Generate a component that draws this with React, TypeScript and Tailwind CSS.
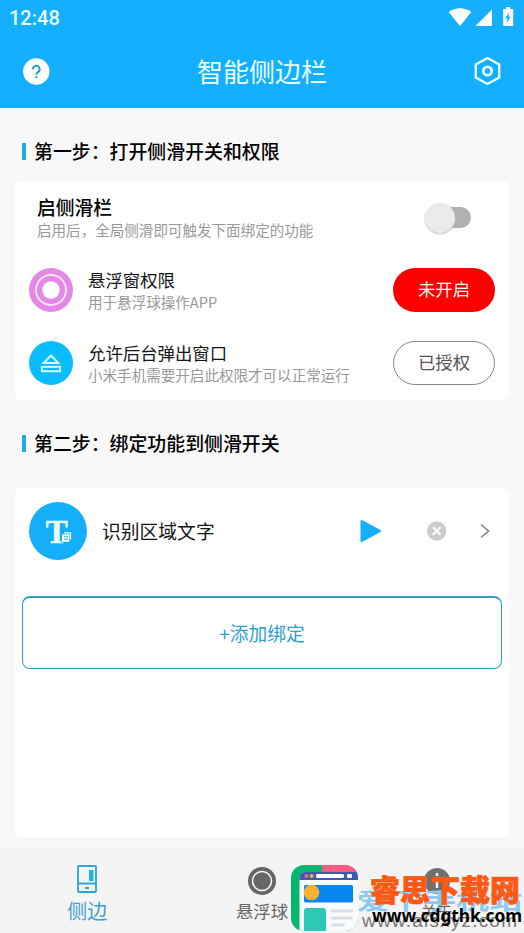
import React from "react";

const cjk = "font-['Noto_Sans_CJK_SC',sans-serif]";

function StatusBar() {
  return (
    <div className="flex h-9 items-center justify-between pl-[9px] pr-2 text-[#eaffff]">
      <span className="font-[Roboto,sans-serif] text-[20px] font-medium leading-9">12:48</span>
      <svg className="h-9 w-[68px]" viewBox="0 0 68 36" fill="#fff">
        <path d="M.7 12Q12 4.500 23.300 12L12 26z" />
        <path d="M44 9.500V26H27.500z" />
        <path d="M55.200 9h3V7h4v2h3v17h-10z" />
        <path d="M61.500 12l-4.500 6.500h2.500L58.700 23l4-6.500h-2.400z" fill="#12aeff" />
      </svg>
    </div>
  );
}

function Header() {
  return (
    <header className="h-[108px] shrink-0 bg-[#14affe]">
      <StatusBar />
      <div className="flex h-[70px] items-center justify-between pl-[23px] pr-[23px]">
        <svg className="h-[27px] w-[27px]" viewBox="0 0 27 27">
          <circle cx="13.300" cy="13.500" r="13.200" fill="#fff" />
          <path d="M9.900 11.200a3.400 3.400 0 1 1 5.100 2.900q-1.700 1-1.700 2.600" fill="none" stroke="#249bd0" strokeWidth="1.900" />
          <circle cx="13.300" cy="19.200" r="1.100" fill="#249bd0" />
        </svg>
        <h1 className="text-[26px] leading-[36px] text-[#eaffff]">智能侧边栏</h1>
        <svg className="h-[30px] w-[27px]" viewBox="0 0 27 30" fill="none" stroke="#eaffff">
          <path d="M13.500 2L25.200 8.500v13L13.500 28 1.800 21.500v-13z" strokeWidth="2.400" />
          <circle cx="13.500" cy="15" r="4.200" strokeWidth="2.700" />
        </svg>
      </div>
    </header>
  );
}

function StepTitle({ children }: { children: string }) {
  return (
    <div className="flex h-7 items-center pl-[22px]">
      <span className="mr-2 h-[17px] w-1 rounded-[1px] bg-[#20aae2]" />
      <h2 className="text-[18.9px] font-medium leading-7 text-black">{children}</h2>
    </div>
  );
}

function Permission({ icon, title, note, action }: { icon: React.ReactNode; title: string; note: string; action: React.ReactNode }) {
  return (
    <div className="flex h-[73px] items-center pl-[14px] pr-[14px]">
      {icon}
      <div className="ml-[15px] flex-1">
        <div className="text-[17.4px] leading-[22px] text-[#151515]">{title}</div>
        <div className="text-[14.550px] leading-[21px] text-[#999]">{note}</div>
      </div>
      {action}
    </div>
  );
}

function Permissions() {
  return (
    <section className="mx-[15px] h-[219px] rounded-md bg-white">
      <div className="flex h-[73px] items-center justify-between pl-[22px] pr-[38px]">
        <div className="-mt-px">
          <div className="text-[18.8px] font-medium leading-6 text-black">启侧滑栏</div>
          <div className="text-[14.550px] leading-[21px] text-[#999]">启用后，全局侧滑即可触发下面绑定的功能</div>
        </div>
        <div className="flex h-[21px] w-[46px] items-center rounded-full bg-[#b1b1b1]">
          <span className="h-[30px] w-[30px] shrink-0 rounded-full bg-[#ebebeb] shadow-[0_1px_2px_#bbb]" />
        </div>
      </div>
      <Permission
        icon={
          <svg className="mb-[2px] h-11 w-11" viewBox="0 0 44 44">
            <circle cx="22" cy="22" r="22" fill="#e388e5" />
            <circle cx="22" cy="22" r="15" fill="none" stroke="#fbe7fb" strokeWidth="1.800" />
            <circle cx="22" cy="22" r="8.700" fill="#fff" />
          </svg>
        }
        title="悬浮窗权限"
        note="用于悬浮球操作APP"
        action={<button className="mb-[2px] h-11 w-[102px] rounded-full bg-[#fe0000] text-[17.4px] text-[#fff4f0]">未开启</button>}
      />
      <Permission
        icon={
          <svg className="mb-[2px] h-11 w-11" viewBox="0 0 44 44">
            <circle cx="22" cy="22" r="22" fill="#08bdff" />
            <path d="M22 14.500l7.300 7.500H14.700z" fill="none" stroke="#d8faff" strokeWidth="2" />
            <rect x="12.900" y="25.800" width="18.200" height="4.400" fill="none" stroke="#d8faff" strokeWidth="2" />
          </svg>
        }
        title="允许后台弹出窗口"
        note="小米手机需要开启此权限才可以正常运行"
        action={<button className="mb-[2px] h-11 w-[102px] rounded-full border border-[#888] text-[17.4px] text-[#555]">已授权</button>}
      />
    </section>
  );
}

function Bindings() {
  return (
    <section className="mx-[15px] mt-[31px] h-[349px] rounded-md bg-white">
      <div className="flex h-[85px] items-center pl-[14px]">
        <svg className="h-[58px] w-[58px]" viewBox="0 0 58 58">
          <circle cx="29" cy="29" r="29" fill="#15aefb" />
          <text x="16.800" y="40.500" fill="#eaffff" stroke="#eaffff" strokeWidth=".5" fontFamily="Liberation Serif, serif" fontWeight="700" fontSize="33">T</text>
          <path d="M32.200 29.500h11v11h-11z" fill="#15aefb" />
          <rect x="33" y="32.300" width="7.500" height="7.700" rx="1" fill="#eaffff" />
          <path d="M35 30.800h6.500v6.500" fill="none" stroke="#eaffff" strokeWidth="1.300" />
          <path d="M35 34.700h4M35 37.200h4" stroke="#15aefb" strokeWidth=".9" />
        </svg>
        <span className="ml-[15px] flex-1 text-[18.8px] leading-7 text-[#151515]">识别区域文字</span>
        <svg className="h-7 w-6" viewBox="0 0 24 28">
          <path d="M2.500 4L21 14 2.500 24z" fill="#15aefb" stroke="#15aefb" strokeWidth="2" strokeLinejoin="round" />
        </svg>
        <svg className="ml-[44px] h-5 w-5" viewBox="0 0 20 20">
          <circle cx="9.700" cy="10" r="9.700" fill="#ccc" />
          <path d="M5.900 6.200l7.600 7.600m0-7.600l-7.600 7.600" stroke="#fff" strokeWidth="2.100" />
        </svg>
        <svg className="ml-[32px] mr-[18px] h-4 w-[12px]" viewBox="0 0 12 16" fill="none" stroke="#858585" strokeWidth="1.600">
          <path d="M2 1.500L9.500 8 2 14.500" />
        </svg>
      </div>
      <button className="ml-[7px] mt-[23px] block h-[73px] w-[480px] rounded-lg border border-t-2 border-[#329dca] text-[18.8px] text-[#2ba2d2]">
        +添加绑定
      </button>
    </section>
  );
}

function Watermark() {
  return (
    <div className="absolute bottom-0 left-[290px] h-[72px] w-[234px]">
      <svg className="absolute left-0 top-[3px] h-[68px] w-[68px]" viewBox="0 0 68 68">
        <defs>
          <clipPath id="tile">
            <rect x="1" y="1" width="67" height="66" rx="13" />
          </clipPath>
        </defs>
        <g clipPath="url(#tile)">
          <rect width="68" height="68" fill="#07b76f" />
          <rect x="32" width="36" height="20" fill="#f85a83" />
          <path d="M9.500 14q0-6 6-6h53v60h-59z" fill="#f9fcff" />
          <path d="M9.500 16V14q0-6 6-6h53v8z" fill="#3e5ba9" />
          <circle cx="16.500" cy="12" r="1.900" fill="#f0678c" />
          <circle cx="21.600" cy="12" r="1.900" fill="#ffb331" />
          <rect x="26" y="10" width="28" height="4" rx="1.500" fill="#fff" />
          <rect x="57" y="10" width="5" height="4" rx="1" fill="#fff" />
          <rect x="14" y="21" width="49" height="17.500" rx="1.500" fill="#0787ed" />
          <circle cx="21.500" cy="28.500" r="7.800" fill="#ffb12e" />
          <path d="M14 47q0-3 3-3h16q3 0 3 3v21H14z" fill="#2dc9b7" />
          <path d="M42.500 47h19M42.500 54h19M42.500 61h11" stroke="#ddd" strokeWidth="3.200" strokeLinecap="round" />
        </g>
      </svg>
      <span className="absolute left-[67px] top-[19px] origin-center scale-y-[0.700] whitespace-nowrap text-[33px] font-bold leading-[38px] text-[#8cc9f1]">爱下手机站</span>
      <span className="absolute left-[131px] top-[38px] text-[15.500px] leading-6 text-[#666]">关于</span>
      <span className="absolute left-[72px] top-[48px] whitespace-nowrap font-['Liberation_Sans',sans-serif] text-[19px] leading-6 tracking-[1.200px] text-[#777]">www.aisxyz.com</span>
      <span className="absolute left-[80px] top-[8px] whitespace-nowrap text-[30px] font-black leading-[38px] text-[#fc5915] [-webkit-text-stroke:0.700px_#fc5915]">睿思下载网</span>
      <span className="absolute left-[82px] top-[43px] whitespace-nowrap font-['Noto_Sans',sans-serif] text-[17.300px] font-bold leading-6 text-black">www.cdgthk.com</span>
    </div>
  );
}

function BottomNav() {
  return (
    <nav className="relative mt-auto grid h-[84px] grid-cols-3 border-t border-[#ededed] bg-[#f4f4f4] text-center text-[17.4px] text-[#666]">
      <div className="flex flex-col items-center pt-[15px] text-[20px] text-[#3ba2cf]">
        <svg className="h-7 w-5" viewBox="0 0 20 28" fill="none" stroke="#2ba7d8" strokeWidth="1.800">
          <rect x="1" y="1" width="18" height="26" rx="1" />
          <path d="M1 18.500h18M8 23h4" />
          <path d="M12 5h4.500v11H12z" fill="#20b3e7" stroke="none" />
        </svg>
        <span className="mt-[4px] leading-7">侧边</span>
      </div>
      <div className="flex flex-col items-center pt-[17px]">
        <svg className="h-7 w-7" viewBox="0 0 28 28">
          <circle cx="14" cy="14" r="14" fill="#666" />
          <circle cx="14" cy="14" r="9.500" fill="none" stroke="#f4f4f4" strokeWidth="1.600" />
        </svg>
        <span className="mt-[4px] leading-6">悬浮球</span>
      </div>
      <div className="flex flex-col items-center pt-[17px]">
        <svg className="h-7 w-7" viewBox="0 0 28 28">
          <circle cx="14" cy="14" r="13" fill="#707070" />
          <path d="M14 6v3M14 12v9" stroke="#f4f4f4" strokeWidth="2.500" />
        </svg>
      </div>
      <Watermark />
    </nav>
  );
}

export default function App() {
  return (
    <main className={`${cjk} flex h-[933px] w-[524px] flex-col overflow-hidden bg-[#f8f8f8]`}>
      <Header />
      <div className="pb-4 pt-[29px]">
        <StepTitle>第一步：打开侧滑开关和权限</StepTitle>
      </div>
      <Permissions />
      <div className="pt-[29px]">
        <StepTitle>第二步：绑定功能到侧滑开关</StepTitle>
      </div>
      <Bindings />
      <BottomNav />
    </main>
  );
}
